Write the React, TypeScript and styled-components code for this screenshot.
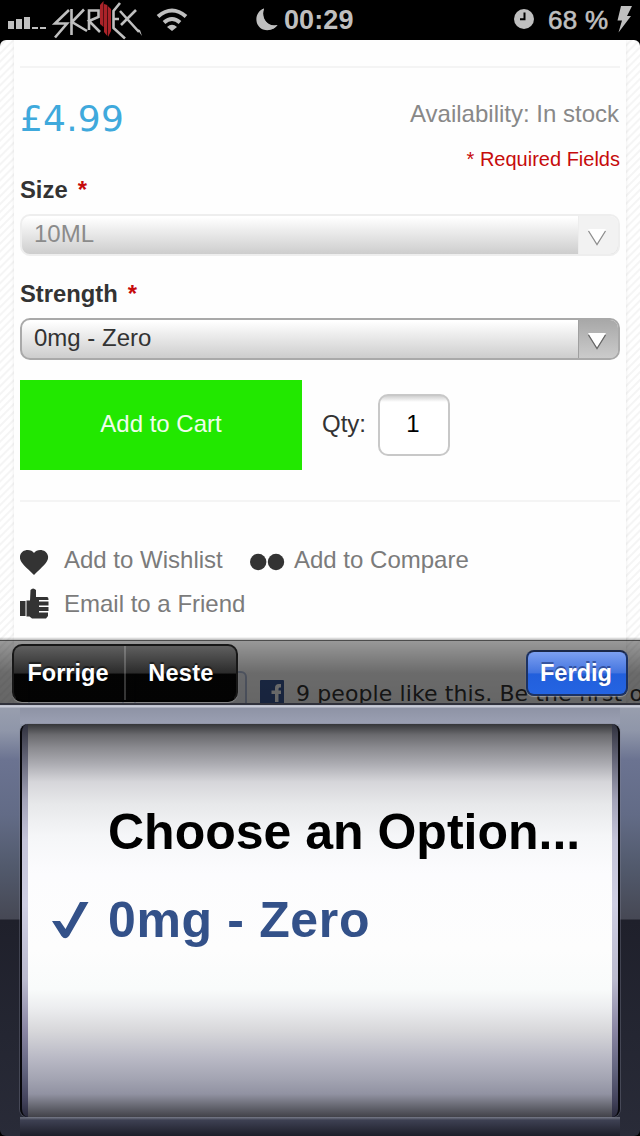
import React from "react";
import styled, { createGlobalStyle } from "styled-components";

const sans = '"Liberation Sans", Arial, sans-serif';
const wide = '"DejaVu Sans", Verdana, sans-serif';

const GlobalStyle = createGlobalStyle`
  *, *::before, *::after { box-sizing: border-box; }
  body { margin: 0; background: #000; font-family: ${sans}; }
  button, input { font: inherit; margin: 0; }
  svg { display: block; flex: none; }
`;

const Screen = styled.div`
  width: 640px;
  height: 1136px;
  display: flex;
  flex-direction: column;
  overflow: hidden;
  background: #000;
`;

/* ---------- status bar ---------- */

const StatusBar = styled.header`
  height: 40px;
  flex: none;
  display: grid;
  grid-template-columns: 248px 1fr 132px;
  color: #bfbfbf;
  line-height: 40px;
`;

const StatusGroup = styled.div<{ $pad: number }>`
  display: flex;
  padding-left: ${(p) => p.$pad}px;
  white-space: pre;
`;

const Clock = styled.span`
  font-size: 27px;
  font-weight: 700;
  margin-left: 6px;
  letter-spacing: 0.1px;
`;

const Battery = styled.span`
  font-size: 26px;
  width: 68px;
  margin-left: 14px;
  letter-spacing: 0.3px;
  -webkit-text-stroke: 0.6px #bfbfbf;
`;

/* ---------- web page ---------- */

const WebView = styled.main`
  position: relative;
  height: 666px;
  flex: none;
  padding: 0 14px;
  overflow: hidden;
  border-radius: 6px 6px 0 0;
  background: repeating-linear-gradient(135deg, #fff 0 2.6px, #f5f5f5 3.6px 4.6px, #fff 5.6px);
`;

const Sheet = styled.div`
  height: 100%;
  padding: 26px 6px 0;
  background: #fefefe;
  box-shadow: 0 0 4px rgba(0, 0, 0, 0.09);
`;

const Rule = styled.hr`
  height: 2px;
  margin: 0;
  border: 0;
  background: #f4f4f4;
`;

const PriceRow = styled.section`
  display: flex;
  justify-content: space-between;
  height: 105px;
`;

const Price = styled.div`
  padding: 29px 0 0;
  font: 36px/44px ${wide};
  font-kerning: none;
  letter-spacing: 0.2px;
  color: #3fa9dc;
`;

const StockInfo = styled.div`
  padding-top: 32px;
  text-align: right;
  font-size: 24px;
  line-height: 28px;
  color: #888;
`;

const StockText = styled.div`
  padding-right: 1px;
`;

const RequiredNote = styled.p`
  margin: 20px 0 0;
  font-size: 20px;
  line-height: 22px;
  color: #c60b0b;
`;

const Field = styled.div`
  display: flex;
  flex-direction: column;
  height: 104px;
`;

const FieldLabel = styled.label`
  height: 41px;
  padding-top: 3px;
  font-size: 23.8px;
  font-weight: 700;
  line-height: 28px;
  color: #333;
`;

const Star = styled.em`
  margin-left: 10px;
  font-style: normal;
  color: #c60b0b;
`;

const SelectBox = styled.div<{ $disabled?: boolean }>`
  display: flex;
  height: 42px;
  overflow: hidden;
  border: 2px solid ${(p) => (p.$disabled ? "#eeeeee" : "#a9a9a9")};
  border-radius: 10px;
  background: linear-gradient(#fff 4%, #f1f1f1 30%, #cdcdcd);
  color: ${(p) => (p.$disabled ? "#8b8b8b" : "#333")};
  font-size: 24px;
  line-height: 36px;
`;

const SelectText = styled.span`
  flex: 1;
  padding-left: 12px;
`;

const SelectArrow = styled.span<{ $disabled?: boolean }>`
  width: 40px;
  padding: 13px 0 0 8px;
  background: ${(p) =>
    p.$disabled ? "#f2f2f2" : "linear-gradient(#a8a8a8, #cbcbcb)"};
  border-left: 1px solid ${(p) => (p.$disabled ? "#ededed" : "#a0a0a0")};
`;

const CartRow = styled.div`
  display: flex;
  align-items: center;
  height: 90px;
  margin: -1px 0 30px;
`;

const CartButton = styled.button`
  width: 282px;
  height: 90px;
  padding: 0 0 2px;
  border: 0;
  background: #22e800;
  color: #f0fdec;
  font-size: 24px;
`;

const QtyLabel = styled.label`
  width: 76px;
  padding: 0 0 2px 20px;
  font-size: 24px;
  color: #333;
`;

const QtyInput = styled.input`
  width: 72px;
  height: 62px;
  padding: 0 2px 2px 0;
  border: 2px solid #c8c8c8;
  border-radius: 10px;
  background: linear-gradient(#d0d0d0, #fff 6px);
  color: #000;
  font-size: 24px;
  text-align: center;
`;

const LinkGrid = styled.nav`
  display: flex;
  flex-wrap: wrap;
  padding-top: 36px;
`;

const ActionLink = styled.a<{ $width: number; $iconTop: number }>`
  display: grid;
  grid-template-columns: 44px 1fr;
  width: ${(p) => p.$width}px;
  height: 44px;
  align-items: center;
  font-size: 24px;
  line-height: 28px;
  color: #7b7b7b;
  white-space: nowrap;
  svg { margin-top: ${(p) => p.$iconTop}px; }
`;

const SocialRow = styled.div`
  display: flex;
  width: 612px;
  margin-top: 45px;
  padding-left: 8px;
  font: 22px/28px ${wide};
  color: #333;
  white-space: nowrap;
`;

const SocialButton = styled.span<{ $width: number }>`
  flex: none;
  width: ${(p) => p.$width}px;
  height: 40px;
  margin-right: 10px;
  border: 2px solid #b4c0dc;
  border-radius: 6px;
  background: #f4f6fb;
`;

const SocialText = styled.span`
  padding: 9px 0 0 12px;
  letter-spacing: 0.1px;
`;

const SocialMark = styled.svg`
  margin: 9px 0 0 3px;
`;

/* ---------- form assistant toolbar ---------- */

const Assistant = styled.div`
  position: absolute;
  left: 0;
  right: 0;
  bottom: 0;
  height: 69px;
  display: flex;
  align-items: flex-start;
  justify-content: space-between;
  padding: 7px 12px 0;
  background:
    linear-gradient(transparent, rgba(0, 0, 0, 0.28)) 0 0 / 100% 3px no-repeat,
    linear-gradient(rgba(0, 0, 0, 0.7), rgba(0, 0, 0, 0.7)) 0 3px / 100% 1px no-repeat,
    linear-gradient(rgba(0, 0, 0, 0.4), rgba(0, 0, 0, 0.58) 32px, rgba(0, 0, 0, 0.6)) 0 4px / 100% 62px no-repeat,
    linear-gradient(#30313b, #30313b) 0 66px / 100% 2px no-repeat,
    linear-gradient(#bfc3d0, #bfc3d0) 0 68px / 100% 1px no-repeat;
`;

const Segments = styled.div`
  display: grid;
  grid-template-columns: 110px 1fr;
  width: 226px;
  height: 58px;
  overflow: hidden;
  border: 2px solid #171717;
  border-bottom-color: #000;
  border-radius: 10px;
  background: linear-gradient(#5f5f5f, #2b2b2b 50%, rgba(0, 0, 0, 0.97) 52%);
  box-shadow: 0 1px 1px rgba(255, 255, 255, 0.25);
`;

const Segment = styled.button`
  padding: 1px 2px 0 0;
  border: 0;
  background: transparent;
  color: #fff;
  font-size: 23.5px;
  font-weight: 700;
  text-shadow: 0 -2px 1px rgba(0, 0, 0, 0.5);
  & + & {
    border-left: 2px solid rgba(255, 255, 255, 0.2);
    padding-right: 0;
    letter-spacing: 0.3px;
  }
`;

const DoneButton = styled.button`
  width: 102px;
  height: 46px;
  margin-top: 6px;
  padding: 1px 2px 0 0;
  border: 2px solid #1c3263;
  border-top-color: #1b2747;
  border-radius: 8px;
  background: linear-gradient(#7c9ff0, #4374df 50%, #225fdc 52%, #2464e2);
  box-shadow: 0 1px 1px rgba(255, 255, 255, 0.35);
  color: #fff;
  font-size: 23.6px;
  font-weight: 700;
  text-shadow: 0 -2px 0 rgba(20, 40, 100, 0.55);
`;

/* ---------- picker ---------- */

const Picker = styled.section`
  height: 430px;
  display: grid;
  grid-template-columns: 20px 600px 20px;
  border-radius: 0 0 6px 6px;
  overflow: hidden;
  background: linear-gradient(#c9ccd8 0 1px, #989eae 2px, #8f96a9 25px, #6b7391 54px, #626b86 110px, #525a6d 160px, #464854 213px, #1f202b 214px, #242632 330px, #292b38);
`;

const WheelColumn = styled.div`
  grid-column: 2;
  padding: 18px 0 19px;
  background:
    linear-gradient(#c9ccd8 0 1px, #8e93a5 2px, #9ba0b3 18px) 0 0 / 100% 18px no-repeat,
    linear-gradient(#656876 0 1px, #3e4153 3px, #1d1e29) 0 100% / 100% 19px no-repeat;
`;

const WheelFrame = styled.div`
  height: 393px;
  padding: 0 6px;
  border: solid #08080c;
  border-width: 0 2px;
  border-radius: 8px;
  overflow: hidden;
  box-shadow: 0 0 0 1px rgba(130, 132, 150, 0.35);
  background: linear-gradient(#30313e, #656678 36px, #a3a3b8 76px, #c4c4d9 116px, #cecee2 180px, #babacd 256px, #8a86a3 306px, #62647e 346px, #43435c 376px, #2a2a3c);
`;

const Wheel = styled.ul`
  height: 393px;
  margin: 0;
  padding: 64px 0 0;
  list-style: none;
  background: linear-gradient(#353639, #6b6b6f 11px, #8b8b90 24px, #acacb2 40px, #d6d6da 58px, #e7e8ea 80px, #f5f6f8 112px, #fcfcfe 150px, #fdfdfd 226px, #f9fbfb 265px, #ecedef 284px, #d7d7da 307px, #b9b9c5 334px, #a3a4b2 355px, #9192a2 370px, #6e6f7a 380px, #424249);
`;

const Option = styled.li<{ $selected?: boolean }>`
  display: grid;
  grid-template-columns: 80px 1fr;
  align-items: center;
  height: 88px;
  font-size: 50px;
  font-weight: 700;
  line-height: 60px;
  letter-spacing: ${(p) => (p.$selected ? "0.65px" : "0")};
  white-space: nowrap;
  color: ${(p) => (p.$selected ? "#335189" : "#000")};
`;

const OptionText = styled.span`
  grid-column: 2;
`;

const CheckMark = styled.svg`
  margin-left: 24px;
`;

/* ---------- drawings ---------- */

const Carrier = () => (
  <svg width="190" height="40" viewBox="0 0 190 40" fill="#bfbfbf">
    <path d="M8 21h6v8H8zM16 19h6v10h-6zM24 17h6v12h-6zM32 27h6v2h-6zM40 27h6v2h-6z" />
    <g fill="none" stroke="#bfbfbf" strokeWidth="2.600">
      <path d="M69 10 55 23.500H67L55 37.500" />
      <path d="M71.500 9V35M84 9.500 72 22 87 31" />
      <path d="M89 30V10.500H98.500V17L89 21 100 32" />
      <path d="M120 3 113.500 11V28L125 38.500M113 19H119" />
      <path d="M120 11 139 32M136 10 121 25" />
    </g>
    <path d="M137 29 140 30 142 36z" />
    <path fill="#ab2329" d="M100 5 103.500 1V27L100 24zM104 4 107.300 5V36L104 32zM107.800 6 111 9V31L108 37z" />
    <g fill="none" stroke="#bfbfbf" strokeWidth="4">
      <path d="M158 16.500Q172 4.500 186 16.500" />
      <path d="M164 22.500Q172 15.500 180 22.500" />
    </g>
    <path d="M167 27Q172 22.500 177 27L172 31z" />
  </svg>
);

const Moon = () => (
  <svg width="22" height="40" viewBox="0 0 22 40" fill="#bfbfbf">
    <path d="M8 8.500A11 11 0 1 0 21.500 25C12 28 4.500 18 8 8.500z" />
    <path d="M8 8.500C-2 12-2 26 7 29.500 13 31.500 19 29 21.500 25 11 27.500 4.500 18 8 8.500z" />
  </svg>
);

const Alarm = () => (
  <svg width="20" height="40" viewBox="0 0 20 40">
    <circle cx="10" cy="19" r="10" fill="#bfbfbf" />
    <path d="M10.500 12.500V19.200H6" fill="none" stroke="#000" strokeWidth="2" />
  </svg>
);

const Bolt = () => (
  <svg width="18" height="40" viewBox="0 0 18 40" fill="#bfbfbf">
    <path d="M5 6H16L11 16H15L2.500 32.500 6 20.500H1.500z" />
  </svg>
);

const Arrow = ({ color }: { color: string }) => (
  <svg width="20" height="17" viewBox="0 0 20 17">
    <path d="M1 0H19L10 15z" fill="#fff" />
    <path d="M1.500 2 10 15.500 18.500 2" fill="none" stroke={color} strokeWidth="1.300" />
  </svg>
);

const Heart = () => (
  <svg width="29" height="28" viewBox="0 0 29 28" fill="#333">
    <path d="M14 4C17-1 27 0 28 7 29 13 23 17 14 26 5 17-1 13 0 7 1 0 11-1 14 4z" />
  </svg>
);

const Dots = () => (
  <svg width="36" height="20" viewBox="0 0 36 20" fill="#333">
    <circle cx="8.200" cy="10" r="8.200" />
    <circle cx="26" cy="10" r="8.200" />
  </svg>
);

const Thumb = () => (
  <svg width="29" height="31" viewBox="0 0 29 31" fill="#333">
    <path d="M0 13H5V28H0zM6.500 12.500H10L10.500 2Q13-1 16 2V9H27Q28.500 9 28.500 12H19V13.500H28.500V17.500H19V19H28.500V23H19V24.500H28V28L26 30.500H12L9.500 28.500H6.500z" />
    <path d="M5 13H6.500V28H5z" fill="#999" />
  </svg>
);

export default function App() {
  return (
    <>
      <GlobalStyle />
      <Screen>
        <StatusBar>
          <StatusGroup $pad={0}>
            <Carrier />
          </StatusGroup>
          <StatusGroup $pad={8}>
            <Moon />
            <Clock>00:29</Clock>
          </StatusGroup>
          <StatusGroup $pad={6}>
            <Alarm />
            <Battery>68 %</Battery>
            <Bolt />
          </StatusGroup>
        </StatusBar>

        <WebView>
          <Sheet>
            <Rule />
            <PriceRow>
              <Price>£4.99</Price>
              <StockInfo>
                <StockText>Availability: In stock</StockText>
                <RequiredNote>* Required Fields</RequiredNote>
              </StockInfo>
            </PriceRow>

            <Field>
              <FieldLabel>
                Size<Star>*</Star>
              </FieldLabel>
              <SelectBox $disabled>
                <SelectText>10ML</SelectText>
                <SelectArrow $disabled>
                  <Arrow color="#8e8e8e" />
                </SelectArrow>
              </SelectBox>
            </Field>
            <Field>
              <FieldLabel>
                Strength<Star>*</Star>
              </FieldLabel>
              <SelectBox>
                <SelectText>0mg - Zero</SelectText>
                <SelectArrow>
                  <Arrow color="#666" />
                </SelectArrow>
              </SelectBox>
            </Field>

            <CartRow>
              <CartButton>Add to Cart</CartButton>
              <QtyLabel>Qty:</QtyLabel>
              <QtyInput defaultValue="1" />
            </CartRow>
            <Rule />

            <LinkGrid>
              <ActionLink $iconTop={6} $width={230}>
                <Heart />
                Add to Wishlist
              </ActionLink>
              <ActionLink $iconTop={3} $width={240}>
                <Dots />
                Add to Compare
              </ActionLink>
              <ActionLink $iconTop={-2} $width={240}>
                <Thumb />
                Email to a Friend
              </ActionLink>
            </LinkGrid>

            <SocialRow>
              <SocialButton $width={96} />
              <SocialButton $width={113} />
              <SocialMark width="24" height="24" viewBox="0 0 24 24">
                <rect width="24" height="24" rx="1" fill="#3b5998" />
                <path d="M15 22V14H11.500V10.500H15V8Q15 4 19 4H21V7.500H19.500Q18.500 7.500 18.500 9V10.500H21V14H18.500V22z" fill="#fff" />
              </SocialMark>
              <SocialText>9 people like this. Be the first of your friends.</SocialText>
            </SocialRow>
          </Sheet>

          <Assistant>
            <Segments>
              <Segment>Forrige</Segment>
              <Segment>Neste</Segment>
            </Segments>
            <DoneButton>Ferdig</DoneButton>
          </Assistant>
        </WebView>

        <Picker>
          <WheelColumn>
            <WheelFrame>
              <Wheel>
                <Option>
                  <OptionText>Choose an Option...</OptionText>
                </Option>
                <Option $selected>
                  <CheckMark width="37" height="37" viewBox="0 0 37 37">
                    <path d="M0 19H8L13.500 27 28 0H36.500L17 34Q13 38.500 9.500 34z" fill="#335189" />
                  </CheckMark>
                  <OptionText>0mg - Zero</OptionText>
                </Option>
              </Wheel>
            </WheelFrame>
          </WheelColumn>
        </Picker>
      </Screen>
    </>
  );
}
